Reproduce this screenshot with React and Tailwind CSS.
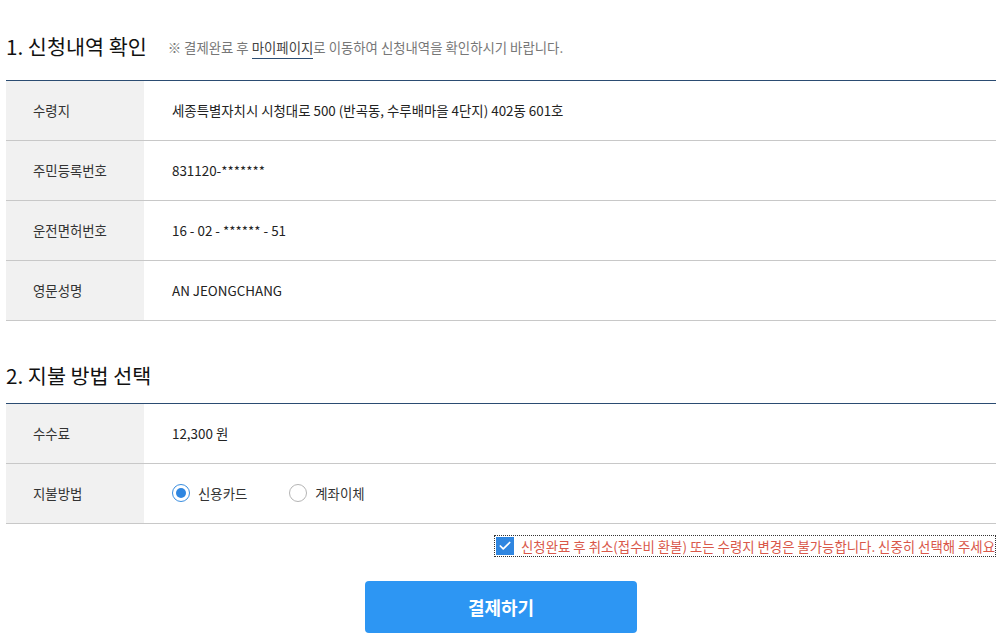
import { Check } from "lucide-react";

const font = { fontFamily: '"Noto Sans CJK KR", "Noto Sans", sans-serif' };

const Row = ({ label, children }) => (
  <div className="flex h-[60px] border-b border-[#c8c8c8]">
    <div className="w-[138px] shrink-0 bg-[#f1f1f1] flex items-center pl-[27px] text-[13.4px] text-[#333]">
      {label}
    </div>
    <div className="flex-1 flex items-center pl-[28px] text-[13.4px] text-[#222]">{children}</div>
  </div>
);

const Radio = ({ checked, label }) => (
  <label className="flex items-center gap-[8px] mr-[42px]">
    <span
      className={
        checked
          ? "w-[18px] h-[18px] rounded-full border border-[#3a8ee0] flex items-center justify-center bg-white"
          : "w-[18px] h-[18px] rounded-full border border-[#b5b5b5] bg-white"
      }
    >
      {checked && <span className="w-[10px] h-[10px] rounded-full bg-[#2f86e0]" />}
    </span>
    <span className="text-[13.4px] text-[#333]">{label}</span>
  </label>
);

export default function App() {
  return (
    <div className="w-[1008px] h-[638px] bg-white overflow-hidden pl-[6px] pr-[12px]" style={font}>
      {/* 1. 신청내역 */}
      <div className="pt-[31px] flex items-center h-[80px] pb-[19px]">
        <h2 className="text-[20.7px] leading-[28px] text-[#111]">1. 신청내역 확인</h2>
        <p className="ml-[21px] text-[13.4px] text-[#777] mt-[3px]">
          ※ 결제완료 후{" "}
          <span className="text-[#444] border-b border-[#2b4c72] pb-[1px]">마이페이지</span>로 이동하여
          신청내역을 확인하시기 바랍니다.
        </p>
      </div>
      <div className="border-t border-[#2b4c72]">
        <Row label="수령지">세종특별자치시 시청대로 500 (반곡동, 수루배마을 4단지) 402동 601호</Row>
        <Row label="주민등록번호">831120-*******</Row>
        <Row label="운전면허번호">16 - 02 - ****** - 51</Row>
        <Row label="영문성명">AN JEONGCHANG</Row>
      </div>

      {/* 2. 지불 방법 */}
      <h2 className="mt-[40px] mb-[14px] text-[20.7px] leading-[28px] text-[#111]">2. 지불 방법 선택</h2>
      <div className="border-t border-[#2b4c72]">
        <Row label="수수료">12,300 원</Row>
        <Row label="지불방법">
          <Radio checked label="신용카드" />
          <Radio label="계좌이체" />
        </Row>
      </div>

      <div className="flex justify-end mt-[11px]">
        <label className="flex items-center gap-[7px] border border-dotted border-[#333] h-[22px]">
          <span className="w-[18px] h-[18px] bg-[#2f86e0] flex items-center justify-center ml-[1px]">
            <Check className="w-[14px] h-[14px] text-white" strokeWidth={3} />
          </span>
          <span className="text-[13.4px] text-[#d9584a] whitespace-nowrap">
            신청완료 후 취소(접수비 환불) 또는 수령지 변경은 불가능합니다. 신중히 선택해 주세요
          </span>
        </label>
      </div>

      <div className="flex justify-center mt-[24px]">
        <button className="w-[272px] h-[52px] rounded-[4px] bg-[#2d96f3] text-white text-[18px] font-bold">
          결제하기
        </button>
      </div>
    </div>
  );
}
